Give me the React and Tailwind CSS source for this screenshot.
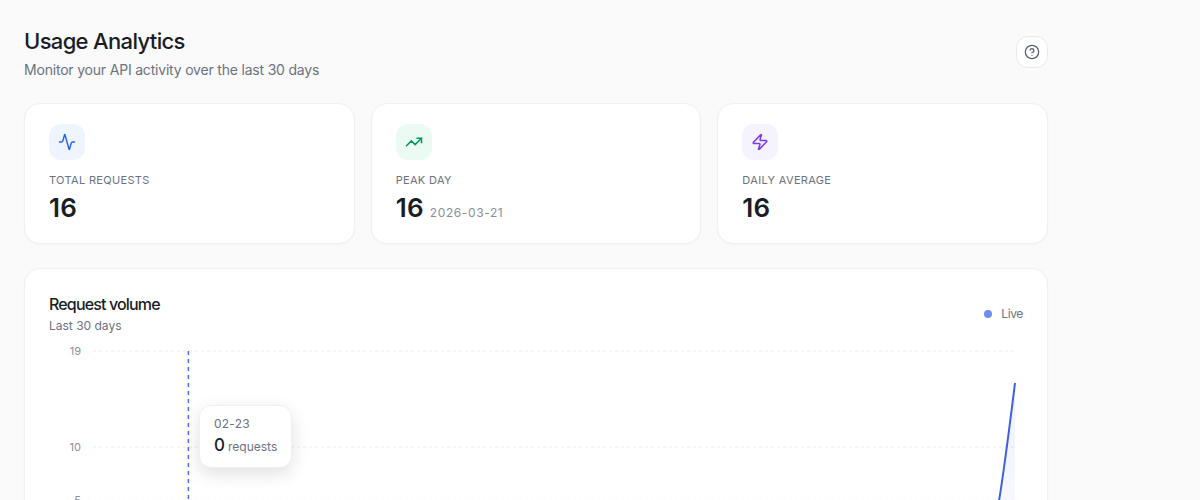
import React from "react";
import { Activity, TrendingUp, Zap, CircleHelp } from "lucide-react";

function Stat({ icon, box, label, value, note }) {
  return (
    <div className="rounded-2xl border border-[#f0f0f2] bg-white px-6 pt-5 pb-[19px] shadow-[0_1px_2px_rgba(0,0,0,0.03)]">
      <div className={`flex h-9 w-9 items-center justify-center rounded-xl ${box}`}>{icon}</div>
      <div className="mt-3 text-[11px] leading-4 tracking-[0.03em] text-[#6b7280]">{label}</div>
      <div className="mt-1 flex items-baseline gap-[6px]">
        <span className="text-[26px] leading-8 font-semibold tracking-[0.01em] text-[#1a1d26]">{value}</span>
        {note && <span className="text-xs tracking-[0.05em] text-[#8a8f9c]">{note}</span>}
      </div>
    </div>
  );
}

const grid = [
  [10, "19"],
  [106, "10"],
  [159.3, "5"],
  [212.6, "0"],
];
const ticks = [
  [44, "02-20"],
  [203, "02-25"],
  [362, "03-02"],
  [521, "03-07"],
  [680, "03-12"],
  [839, "03-17"],
];

export default function App() {
  const line = "M44 212.6 L934.2 212.6 C944.8 212.6 955.4 127.3 966 42";
  return (
    <div className="min-h-screen bg-[#fafafa] font-['Inter',sans-serif]">
      <div className="w-[1072px] p-6">
        <header className="flex items-center justify-between">
          <div className="pt-px">
            <h1 className="text-[22px] leading-8 font-medium tracking-[-0.03em] text-[#1a1d26]">Usage Analytics</h1>
            <p className="mt-[3px] text-sm leading-5 tracking-[-0.014em] text-[#6b7280]">Monitor your API activity over the last 30 days</p>
          </div>
          <button className="flex h-8 w-8 items-center justify-center rounded-xl border border-[#e8e9ed] bg-white text-[#5b6270]">
            <CircleHelp size={16} strokeWidth={2} />
          </button>
        </header>

        <div className="mt-[23px] grid grid-cols-3 gap-4">
          <Stat box="bg-[#eff5ff]" icon={<Activity size={18} strokeWidth={2} className="text-[#2563eb]" />} label="TOTAL REQUESTS" value="16" />
          <Stat box="bg-[#ebfbf3]" icon={<TrendingUp size={18} strokeWidth={2} className="text-[#059669]" />} label="PEAK DAY" value="16" note="2026-03-21" />
          <Stat box="bg-[#f5f3ff]" icon={<Zap size={18} strokeWidth={2} className="text-[#7c3aed]" />} label="DAILY AVERAGE" value="16" />
        </div>

        <section className="mt-6 rounded-2xl border border-[#f0f0f2] bg-white px-6 pt-6 pb-6 shadow-[0_1px_2px_rgba(0,0,0,0.03)]">
          <div className="flex items-center justify-between">
            <div>
              <h2 className="text-base leading-[23px] font-medium tracking-[-0.053em] text-[#1a1d26]">Request volume</h2>
              <p className="mt-[2px] text-xs leading-4 text-[#6b7280]">Last 30 days</p>
            </div>
            <div className="flex items-center gap-[9px] text-xs tracking-[-0.03em] text-[#6b7280]">
              <span className="h-2 w-2 rounded-full bg-[#6f8df0]" />
              Live
            </div>
          </div>

          <div className="relative mt-[7px] h-[240px]">
            <svg className="block h-[240px] w-full" viewBox="0 0 974 240" fill="none">
              <defs>
                <linearGradient id="areaFill" x1="0" y1="0" x2="0" y2="1">
                  <stop offset="0" stopColor="#4f6ef7" stopOpacity="0.1" />
                  <stop offset="1" stopColor="#4f6ef7" stopOpacity="0.02" />
                </linearGradient>
              </defs>
              {grid.map(([y, label]) => (
                <g key={label}>
                  <line x1="44" x2="966" y1={y} y2={y} stroke="#ececec" strokeDasharray="3 3" />
                  <text x="32" y={y + 4} textAnchor="end" fontSize="11" fill="#8a8f9c">{label}</text>
                </g>
              ))}
              {ticks.map(([x, label]) => (
                <text key={label} x={x} y="234" textAnchor="middle" fontSize="11" fill="#8a8f9c">{label}</text>
              ))}
              <path d={`${line} L966 212.6 Z`} fill="url(#areaFill)" />
              <path d={line} stroke="#3f5fe0" strokeWidth="2" />
              <line x1="139.4" x2="139.4" y1="10" y2="212.6" stroke="#4f6ef7" strokeWidth="1.5" strokeDasharray="4 4" />
            </svg>
            <div className="absolute top-[64px] left-[150px] rounded-xl border border-[#f0f0f2] bg-white px-[14px] pt-[8px] pb-[10px] shadow-[0_6px_18px_rgba(0,0,0,0.12)]">
              <div className="text-xs leading-5 tracking-[0.02em] text-[#6b7280]">02-23</div>
              <div className="-mt-px flex items-baseline gap-[3px] whitespace-nowrap">
                <span className="text-[17px] leading-6 font-medium text-[#1a1d26]">0</span>
                <span className="text-xs text-[#6b7280]">requests</span>
              </div>
            </div>
          </div>
        </section>
      </div>
    </div>
  );
}
